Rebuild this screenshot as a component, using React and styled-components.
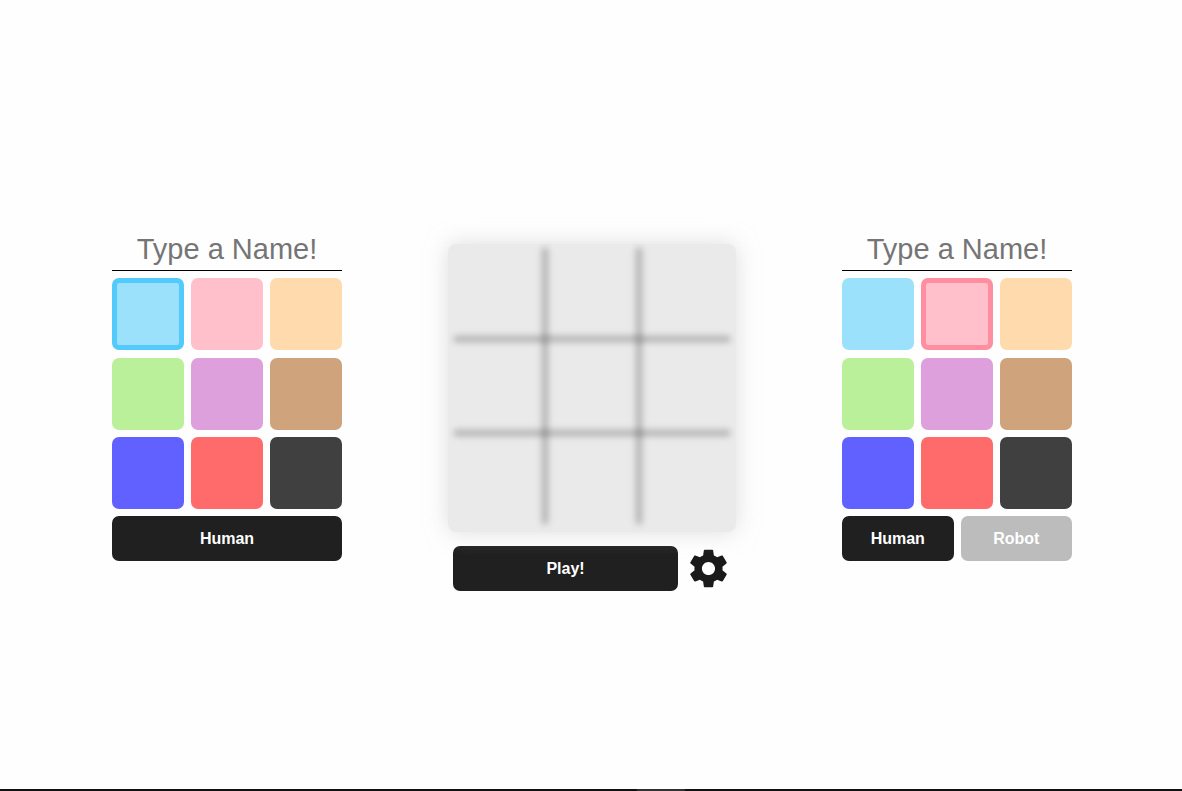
import React, { useState } from "react";
import styled, { createGlobalStyle } from "styled-components";

const GlobalStyle = createGlobalStyle`
  *, *::before, *::after { box-sizing: border-box; }
  body {
    margin: 0;
    background: #fefefe;
    font-family: Arial, "Liberation Sans", sans-serif;
  }
`;

const Page = styled.div`
  display: flex;
  flex-direction: column;
  min-height: 100vh;
`;

const Game = styled.main`
  flex: 1;
  display: flex;
  justify-content: center;
  align-items: center;
  gap: 106px;
  padding-left: 2px;
`;

const PlayerPanel = styled.section`
  display: flex;
  flex-direction: column;
  gap: 7px;
  width: 230px;
`;

const NameInput = styled.input`
  width: 100%;
  height: 43px;
  padding: 0;
  border: 0;
  border-bottom: 1px solid #000;
  border-radius: 0;
  background: transparent;
  color: #202020;
  font-family: inherit;
  font-size: 29px;
  text-align: center;
  outline: none;

  &::placeholder { color: #757575; }
`;

const Palette = styled.div`
  display: grid;
  grid-template-columns: repeat(3, 72px);
  grid-auto-rows: 72px;
  justify-content: space-between;
  align-content: space-between;
  height: 231px;
`;

const Swatch = styled.input`
  appearance: none;
  width: 72px;
  height: 72px;
  margin: 0;
  border-radius: 7px;
  background: ${(p) => p.$fill};
  cursor: pointer;

  &:checked { border: 5px solid ${(p) => p.$edge}; }
`;

const ButtonRow = styled.div`
  display: flex;
  gap: 7px;
`;

const Button = styled.button`
  flex: 1;
  height: 45px;
  padding: 0;
  border: 0;
  border-radius: 7px;
  background: ${(p) => (p.$muted ? "#bcbcbc" : "#202020")};
  color: #fff;
  font-family: inherit;
  font-size: 16px;
  font-weight: 700;
  cursor: pointer;
`;

const BoardColumn = styled.section`
  display: flex;
  flex-direction: column;
  align-items: center;
  gap: 14px;
  margin-top: 46px;
`;

const Board = styled.div`
  position: relative;
  z-index: 1;
  width: 288px;
  height: 288px;
  border-radius: 8px;
  background: #eaeaea;
  box-shadow: 0 0 22px rgba(200, 200, 200, 0.6);
`;

const Grid = styled.svg`
  display: block;
  width: 100%;
  height: 100%;
  filter: blur(3px);
`;

const Controls = styled.div`
  display: flex;
  gap: 8px;
  width: 278px;
`;

const SettingsButton = styled.button`
  width: 45px;
  height: 45px;
  padding: 0;
  border: 0;
  background: transparent;
  color: #1a1a1a;
  cursor: pointer;
`;

const GearIcon = styled.svg`
  display: block;
  width: 45px;
  height: 45px;
  fill: currentColor;
`;

const BottomEdge = styled.footer`
  display: flex;
  justify-content: center;
  height: 2px;
  padding-left: 140px;
  background: #111;
`;

const ActiveMark = styled.span`
  width: 48px;
  background: #303030;
`;

const COLORS = [
  { name: "Sky blue", fill: "#9be1fc", edge: "#52cafc" },
  { name: "Pink", fill: "#ffc0cb", edge: "#ff8fa0" },
  { name: "Peach", fill: "#ffdaad", edge: "#ffbd6b" },
  { name: "Green", fill: "#bbf09a", edge: "#8fdc5c" },
  { name: "Plum", fill: "#dda0dd", edge: "#c76bc7" },
  { name: "Tan", fill: "#cfa37c", edge: "#b07c4c" },
  { name: "Blue", fill: "#6161ff", edge: "#2e2eff" },
  { name: "Red", fill: "#ff6b6b", edge: "#ff3030" },
  { name: "Charcoal", fill: "#404040", edge: "#101010" },
];

function Player({ id, initialColor, kinds }) {
  const [color, setColor] = useState(initialColor);
  const [kind, setKind] = useState(kinds[0]);
  return (
    <PlayerPanel>
      <NameInput placeholder="Type a Name!" aria-label={`Player ${id} name`} />
      <Palette role="radiogroup" aria-label={`Player ${id} color`}>
        {COLORS.map((c, i) => (
          <Swatch
            key={c.name}
            type="radio"
            name={`color-${id}`}
            aria-label={c.name}
            checked={color === i}
            onChange={() => setColor(i)}
            $fill={c.fill}
            $edge={c.edge}
          />
        ))}
      </Palette>
      <ButtonRow>
        {kinds.map((k) => (
          <Button
            key={k}
            type="button"
            aria-pressed={kind === k}
            $muted={kind !== k}
            onClick={() => setKind(k)}
          >
            {k}
          </Button>
        ))}
      </ButtonRow>
    </PlayerPanel>
  );
}

export default function App() {
  return (
    <Page>
      <GlobalStyle />
      <Game>
        <Player id={1} initialColor={0} kinds={["Human"]} />
        <BoardColumn>
          <Board>
            <Grid viewBox="0 0 288 288" aria-hidden="true">
              <g stroke="#000" strokeOpacity="0.22" strokeWidth="7" strokeLinecap="round">
                <path d="M97 7V277" />
                <path d="M191 7V277" />
                <path d="M9 95H279" />
                <path d="M9 189H279" />
              </g>
            </Grid>
          </Board>
          <Controls>
            <Button type="button">Play!</Button>
            <SettingsButton type="button" aria-label="Settings">
              <GearIcon viewBox="0 0 24 24" aria-hidden="true">
                <path d="M19.43 12.98c.04-.32.07-.64.07-.98s-.03-.66-.07-.98l2.11-1.65c.19-.15.24-.42.12-.64l-2-3.46c-.12-.22-.39-.3-.61-.22l-2.49 1c-.52-.4-1.08-.73-1.69-.98l-.38-2.65C14.46 2.18 14.25 2 14 2h-4c-.25 0-.46.18-.49.42l-.38 2.65c-.61.25-1.17.59-1.69.98l-2.49-1c-.23-.09-.49 0-.61.22l-2 3.46c-.13.22-.07.49.12.64l2.11 1.65c-.04.32-.07.65-.07.98s.03.66.07.98l-2.11 1.65c-.19.15-.24.42-.12.64l2 3.46c.12.22.39.3.61.22l2.49-1c.52.4 1.08.73 1.69.98l.38 2.65c.03.24.24.42.49.42h4c.25 0 .46-.18.49-.42l.38-2.65c.61-.25 1.17-.59 1.69-.98l2.49 1c.23.09.49 0 .61-.22l2-3.46c.12-.22.07-.49-.12-.64l-2.11-1.65zM12 15.5c-1.93 0-3.5-1.57-3.5-3.5s1.57-3.5 3.5-3.5 3.5 1.57 3.5 3.5-1.57 3.5-3.5 3.5z" />
              </GearIcon>
            </SettingsButton>
          </Controls>
        </BoardColumn>
        <Player id={2} initialColor={1} kinds={["Human", "Robot"]} />
      </Game>
      <BottomEdge>
        <ActiveMark />
      </BottomEdge>
    </Page>
  );
}
